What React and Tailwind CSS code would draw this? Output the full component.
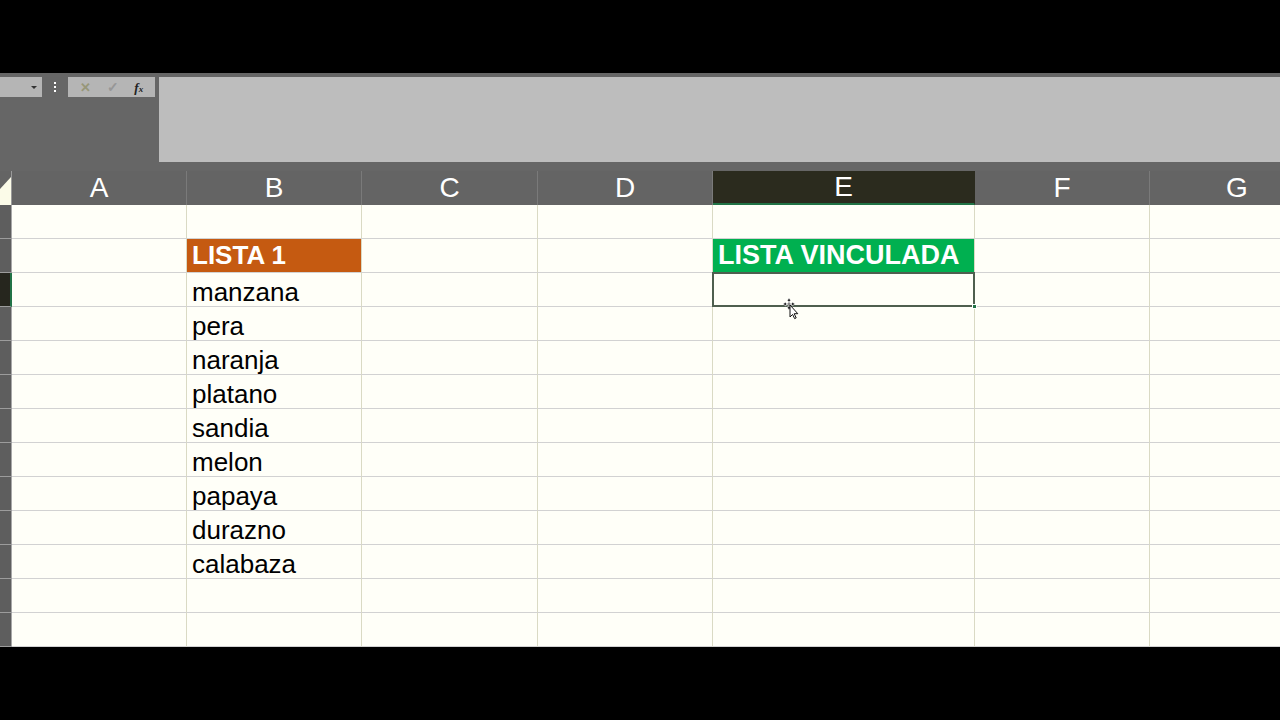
import React from 'react';

const cols = [
  { l: 'A', w: 'w-[175px]' },
  { l: 'B', w: 'w-[175px]' },
  { l: 'C', w: 'w-[176px]' },
  { l: 'D', w: 'w-[175px]' },
  { l: 'E', w: 'w-[262px]' },
  { l: 'F', w: 'w-[175px]' },
  { l: 'G', w: 'w-[175px]' },
];

const fruits = ['manzana', 'pera', 'naranja', 'platano', 'sandia', 'melon', 'papaya', 'durazno', 'calabaza'];

function cellContent(row, col) {
  if (col === 'B' && row === 2) return { text: 'LISTA 1', head: 'bg-[#c55a11]', size: 'text-[26px]' };
  if (col === 'E' && row === 2) return { text: 'LISTA VINCULADA', head: 'bg-[#00b050]', size: 'text-[27px]' };
  if (col === 'B' && row >= 3 && row <= 11) return { text: fruits[row - 3], size: 'text-[26px]' };
  return null;
}

function MoveCursor() {
  return (
    <svg className="absolute z-20 left-[70px] top-[25px] pointer-events-none" width="18" height="22" viewBox="0 0 18 22">
      {/* cross arrows */}
      <path d="M6 0 L8 3 L6.6 3 L6.6 5.4 L9 5.4 L9 4 L12 6 L9 8 L9 6.6 L6.6 6.6 L6.6 9 L8 9 L6 12 L4 9 L5.4 9 L5.4 6.6 L3 6.6 L3 8 L0 6 L3 4 L3 5.4 L5.4 5.4 L5.4 3 L4 3 Z" fill="#111" stroke="#fff" strokeWidth="0.6" />
      {/* pointer */}
      <path d="M7 7 L7 19 L9.6 16.4 L11.6 20.6 L13.2 19.9 L11.2 15.7 L14.8 15.7 Z" fill="#fff" stroke="#111" strokeWidth="1" />
    </svg>
  );
}

function Toolbar() {
  return (
    <div className="h-[98px] bg-[#666666] flex items-start pt-[4px]">
      <div className="w-[42px] h-[20px] bg-[#b5b5b5] flex items-center justify-end pr-[5px]">
        <span className="w-0 h-0 border-l-[3px] border-r-[3px] border-t-[3px] border-l-transparent border-r-transparent border-t-[#333]" />
      </div>
      <div className="w-[26px] h-[20px] flex flex-col items-center justify-center gap-[2px]">
        <span className="w-[2px] h-[2px] bg-white" />
        <span className="w-[2px] h-[2px] bg-white" />
        <span className="w-[2px] h-[2px] bg-white" />
      </div>
      <div className="w-[87px] h-[20px] bg-[#b5b5b5] flex items-center justify-around px-[4px]">
        <span className="text-[#979779] font-bold text-[13px] leading-none">✕</span>
        <span className="text-[#979797] font-bold text-[14px] leading-none">✓</span>
        <span className="text-[#222] italic font-bold leading-none font-['Liberation_Serif',serif] text-[13px]">
          f<span className="text-[9px]">x</span>
        </span>
      </div>
      <div className="ml-[4px] flex-1 h-[85px] bg-[#bdbdbd]" />
    </div>
  );
}

function HeaderRow() {
  return (
    <div className="flex h-[34px] bg-[#646464] shrink-0">
      <div className="w-[12px] shrink-0 border-r border-[#9a9a9a] relative overflow-hidden">
        <svg className="absolute right-0 bottom-0" width="11" height="28" viewBox="0 0 11 28">
          <path d="M11 0 L11 28 L0 28 L0 12 Z" fill="#fbfbe8" />
        </svg>
      </div>
      {cols.map((c) => (
        <div
          key={c.l}
          className={`${c.w} shrink-0 flex items-center justify-center text-[28px] leading-[34px] text-white border-r ${
            c.l === 'E' ? 'bg-[#2b2b1e] border-[#2b2b1e] border-b-2 border-b-[#217346]' : 'border-[#7a7a7a]'
          }`}
        >
          {c.l}
        </div>
      ))}
    </div>
  );
}

function Row({ n }) {
  const selected = n === 3;
  return (
    <div className="flex h-[34px] shrink-0">
      <div
        className={`w-[12px] shrink-0 border-b border-[#9c9c9c] ${
          selected ? 'bg-[#26261e] border-r-2 border-r-[#217346]' : 'bg-[#5e5e5e] border-r border-r-[#a8a8a8]'
        }`}
      />
      {cols.map((c) => {
        const cc = cellContent(n, c.l);
        const isSel = selected && c.l === 'E';
        return (
          <div
            key={c.l}
            className={`${c.w} shrink-0 relative border-b border-r border-b-[#d2d2d2] border-r-[#dadac4] ${
              cc && cc.head ? cc.head : 'bg-[#fffff8]'
            } ${isSel ? 'z-10' : ''}`}
          >
            {cc && (
              <div
                className={`pl-[5px] whitespace-nowrap ${cc.size} ${
                  cc.head ? 'font-bold text-white leading-[33px]' : 'text-black leading-[38px]'
                }`}
              >
                {cc.text}
              </div>
            )}
            {isSel && (
              <>
                <div className="absolute -left-[1px] -top-[1px] -right-[1px] -bottom-[1px] border-2 border-[#4f5f4f]" />
                <div className="absolute -right-[3px] -bottom-[3px] w-[5px] h-[5px] bg-[#217346] border border-white" />
                <MoveCursor />
              </>
            )}
          </div>
        );
      })}
    </div>
  );
}

export default function App() {
  const rows = Array.from({ length: 13 }, (_, i) => i + 1);
  return (
    <div className="w-[1280px] h-[720px] bg-black flex flex-col overflow-hidden font-['Liberation_Sans',Arial,sans-serif]">
      <div className="h-[73px] shrink-0" />
      <Toolbar />
      <HeaderRow />
      <div className="flex flex-col overflow-hidden">
        {rows.map((n) => (
          <Row key={n} n={n} />
        ))}
      </div>
    </div>
  );
}
